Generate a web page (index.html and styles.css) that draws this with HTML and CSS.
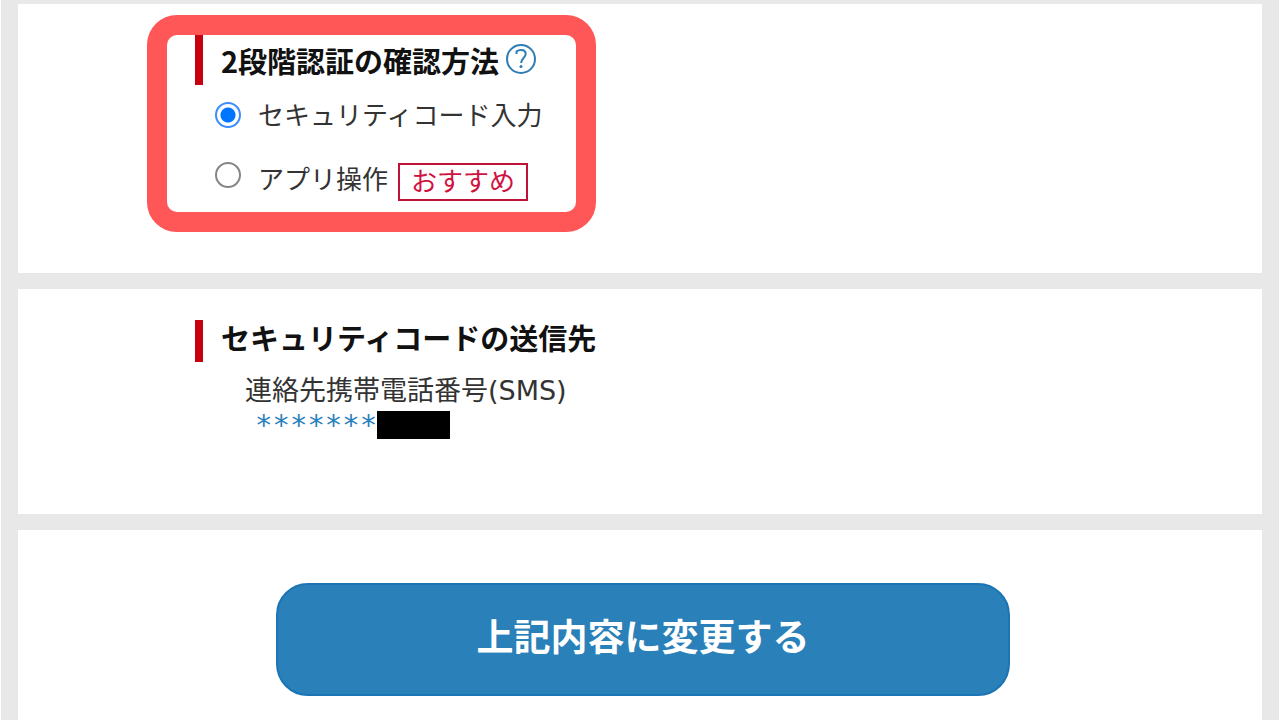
FILE: index.html
```html
<!DOCTYPE html>
<html lang="ja">
<head>
  <meta charset="UTF-8">
  <meta name="viewport" content="width=device-width, initial-scale=1">
  <title>2段階認証の確認方法</title>
  <link rel="stylesheet" href="styles.css">
</head>
<body>
  <form class="page">
    <section class="panel">
      <div class="method">
        <h2 class="heading heading-help" id="method-title">
          <span>2段階認証の確認方法</span>
          <a class="help" href="#help" aria-label="ヘルプ">
            <svg viewBox="0 0 32 32" width="32" height="32" fill="none" stroke="#2f7db3">
              <circle cx="16" cy="16" r="14" stroke-width="2"/>
              <path d="M11.500 11V8.500C12.600 7.500 14.200 7 16 7c2.800 0 4.700 1.600 4.700 4 0 3.600-4.600 4.600-4.600 9" stroke-width="2"/>
              <circle cx="16" cy="23.500" r="1.500" fill="#2f7db3" stroke="none"/>
            </svg>
          </a>
        </h2>
        <div class="options" role="radiogroup" aria-labelledby="method-title">
          <label class="option">
            <input type="radio" name="method" value="code" checked>
            <span class="option-text">セキュリティコード入力</span>
          </label>
          <label class="option option-app">
            <input type="radio" name="method" value="app">
            <span class="option-text">アプリ操作</span>
            <span class="badge">おすすめ</span>
          </label>
        </div>
      </div>
    </section>

    <section class="panel">
      <h2 class="heading">セキュリティコードの送信先</h2>
      <div class="contact">
        <p>連絡先携帯電話番号(SMS)</p>
        <p class="phone"><span>*******</span><span class="mask"></span></p>
      </div>
    </section>

    <section class="panel panel-submit">
      <button class="submit" type="button">上記内容に変更する</button>
    </section>
  </form>
</body>
</html>
```
FILE: styles.css
```css
* {
  box-sizing: border-box;
}
body {
  margin: 0;
  background: #fff;
  color: #333;
  font-family: "DejaVu Sans", "Noto Sans CJK JP", sans-serif;
  font-size: 26px;
}
h2, p {
  margin: 0;
}
.page {
  display: flex;
  flex-direction: column;
  gap: 16px;
  min-height: 100vh;
  margin: 0 1px;
  padding: 4px 17px 0;
  background: #e8e8e8;
}
.panel {
  padding: 31px 24px 72px 177px;
  background: #fff;
}

/* section headings */
.heading {
  padding: 0 0 8px 18px;
  border-left: 8px solid #c7000f;
  color: #111;
  font-family: "Noto Sans CJK JP", sans-serif;
  font-size: 29px;
  line-height: 34px;
}
.heading-help {
  display: flex;
  align-items: flex-start;
  gap: 6px;
  padding-top: 8px;
}
.help {
  display: flex;
}

/* framed block */
.method {
  position: relative;
  width: fit-content;
}
.method::after {
  content: "";
  position: absolute;
  top: -20px;
  right: -54px;
  bottom: -31px;
  left: -48px;
  border: 20px solid #ff5757;
  border-radius: 30px;
  pointer-events: none;
}

.options {
  display: flex;
  flex-direction: column;
  gap: 22px;
  padding: 12px 0 0 20px;
}
.option {
  display: flex;
  align-items: flex-start;
  line-height: 38px;
}
.option input {
  appearance: none;
  width: 26px;
  height: 26px;
  margin: 5px 17px 0 0;
  border: 2px solid #858585;
  border-radius: 50%;
  background: #fff;
}
.option input:checked {
  border-color: #3b8cff;
  background: radial-gradient(circle, #0075ff 7px, #fff 8px);
}
.option-app .option-text {
  padding-top: 4px;
}
.badge {
  margin: 6px 0 0 10px;
  padding: 0 11px;
  border: 2px solid #bf1238;
  color: #d01241;
  line-height: 34px;
}

/* code destination */
.contact {
  padding: 12px 0 0 50px;
  font-size: 27px;
  line-height: 34px;
}
.phone {
  display: flex;
  align-items: center;
  padding-left: 10px;
  color: #2a80b9;
  font-family: "DejaVu Sans Mono", monospace;
  font-size: 29px;
}
.mask {
  width: 73px;
  height: 28px;
  background: #000;
}

/* submit */
.panel-submit {
  flex: 1;
  padding: 53px 7px 23px 13px;
  text-align: center;
}
.submit {
  width: 60%;
  padding: 22px 0 31px;
  border: 2px solid #1b74b3;
  border-radius: 32px;
  background: #2a80b9;
  color: #fff;
  font-family: "Noto Sans CJK JP", sans-serif;
  font-size: 37px;
  font-weight: bold;
  line-height: 56px;
  cursor: pointer;
}
```
